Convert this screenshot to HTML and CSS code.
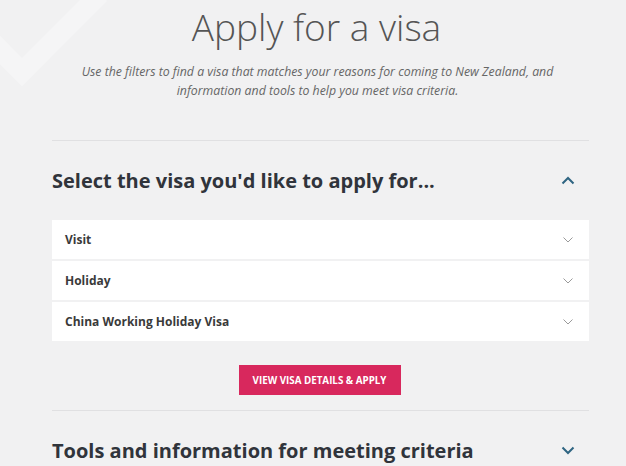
FILE: index.html
```html
<!DOCTYPE html>
<html lang="en">
<head>
<meta charset="utf-8">
<title>Apply for a visa</title>
<link rel="stylesheet" href="styles.css">
</head>
<body>
<svg class="deco" width="200" height="120" viewBox="0 0 200 120" aria-hidden="true">
  <polyline points="-25,25 22,72 100,-6" fill="none" stroke="#ffffff" stroke-opacity="0.3" stroke-width="20"/>
</svg>
<main class="page">
  <header class="intro">
    <h1 class="title">Apply for a visa</h1>
    <p class="lead">Use the filters to find a visa that matches your reasons for coming to New Zealand, and information and tools to help you meet visa criteria.</p>
  </header>

  <section class="panel">
    <div class="panel-head">
      <h2 class="panel-title">Select the visa you'd like to apply for...</h2>
      <svg class="chev-lg" width="14" height="9" viewBox="0 0 14 9"><polyline points="1.5,7.5 7,2 12.5,7.5" fill="none" stroke="#2f6582" stroke-width="2"/></svg>
    </div>
    <ul class="options">
      <li class="option"><span>Visit</span><svg class="chev-sm" width="10" height="6" viewBox="0 0 10 6"><polyline points="0.5,0.5 5,5 9.5,0.5" fill="none" stroke="#9a9a9a" stroke-width="1"/></svg></li>
      <li class="option"><span>Holiday</span><svg class="chev-sm" width="10" height="6" viewBox="0 0 10 6"><polyline points="0.5,0.5 5,5 9.5,0.5" fill="none" stroke="#9a9a9a" stroke-width="1"/></svg></li>
      <li class="option"><span>China Working Holiday Visa</span><svg class="chev-sm" width="10" height="6" viewBox="0 0 10 6"><polyline points="0.5,0.5 5,5 9.5,0.5" fill="none" stroke="#9a9a9a" stroke-width="1"/></svg></li>
    </ul>
    <div class="actions">
      <a class="btn" href="#">View visa details &amp; apply</a>
    </div>
  </section>

  <section class="panel">
    <div class="panel-head">
      <h2 class="panel-title">Tools and information for meeting criteria</h2>
      <svg class="chev-lg" width="14" height="9" viewBox="0 0 14 9"><polyline points="1.5,1.5 7,7 12.5,1.5" fill="none" stroke="#2f6582" stroke-width="2"/></svg>
    </div>
  </section>
</main>
</body>
</html>
```

FILE: styles.css
```css
* { box-sizing: border-box; }
html, body { margin: 0; padding: 0; }
body {
  background: #f1f1f2;
  font-family: "Open Sans", "Liberation Sans", sans-serif;
  color: #333;
  overflow: hidden;
  height: 466px;
}
.deco {
  position: absolute;
  left: 0;
  top: 0;
}
.page {
  position: relative;
  width: 537px;
  margin-left: 52px;
}
.intro {
  text-align: center;
  padding-top: 5px;
}
.title {
  margin: 0;
  font-weight: 300;
  font-size: 37px;
  line-height: 44px;
  color: #555;
  letter-spacing: 0;
  transform: translateX(-4px);
}
.lead {
  margin: 13px auto 0;
  width: 500px;
  font-style: italic;
  font-size: 12.3px;
  line-height: 19px;
  color: #666;
  transform: translateX(-3px);
}
.panel {
  border-top: 1px solid #e0e0e2;
  margin-top: 40px;
}
.panel + .panel { margin-top: 0; }
.panel-head {
  display: flex;
  align-items: center;
  justify-content: space-between;
  height: 79px;
  padding-right: 14px;
}
.panel-title {
  margin: 0;
  font-size: 20px;
  font-weight: 700;
  color: #30343b;
}
.options {
  list-style: none;
  margin: 0;
  padding: 0;
  display: flex;
  flex-direction: column;
  gap: 2px;
}
.option {
  background: #fff;
  height: 39px;
  display: flex;
  align-items: center;
  justify-content: space-between;
  padding: 0 16px 0 13px;
  font-size: 12px;
  font-weight: 700;
  color: #3a3a3a;
}
.actions {
  display: flex;
  justify-content: center;
  padding: 24px 0 15px;
  transform: translateX(-1px);
}
.btn {
  display: inline-flex;
  align-items: center;
  justify-content: center;
  width: 162px;
  height: 30px;
  background: #d8285d;
  color: #fff;
  text-decoration: none;
  text-transform: uppercase;
  font-size: 9.8px;
  font-weight: 700;
}
```
